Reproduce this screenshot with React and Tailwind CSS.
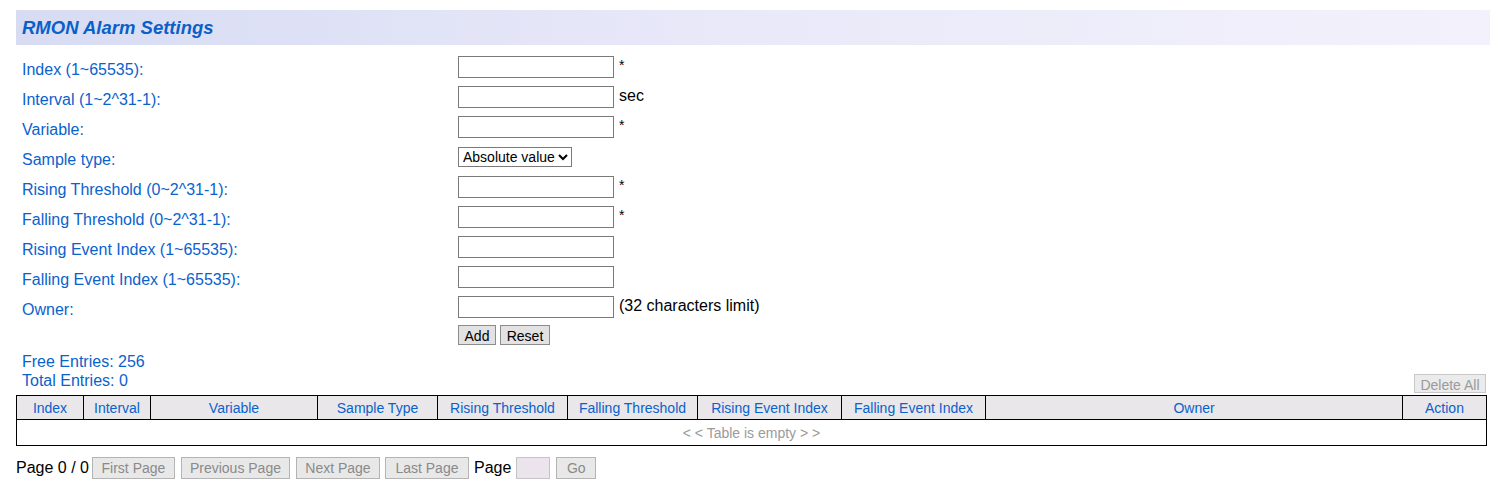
import React from "react";

const rows = [
  { label: "Index (1~65535):", suffix: "*" },
  { label: "Interval (1~2^31-1):", suffix: "sec" },
  { label: "Variable:", suffix: "*" },
  { label: "Sample type:", select: true },
  { label: "Rising Threshold (0~2^31-1):", suffix: "*" },
  { label: "Falling Threshold (0~2^31-1):", suffix: "*" },
  { label: "Rising Event Index (1~65535):" },
  { label: "Falling Event Index (1~65535):" },
  { label: "Owner:", suffix: "(32 characters limit)" },
];

const cols = [
  ["Index", 67],
  ["Interval", 67],
  ["Variable", 167],
  ["Sample Type", 120],
  ["Rising Threshold", 130],
  ["Falling Threshold", 130],
  ["Rising Event Index", 144],
  ["Falling Event Index", 144],
  ["Owner", 417],
  ["Action", 84],
];

function PageBtn({ children, w, className = "" }) {
  return (
    <button
      className={`h-[22px] border border-[#b4b4b4] bg-[#e8e8e8] text-[14px] text-[#8a8a8a] px-0 whitespace-nowrap ${className}`}
      style={{ width: w }}
    >
      {children}
    </button>
  );
}

export default function App() {
  return (
    <div
      className="w-[1495px] h-[492px] bg-white pt-[10px] text-[16px]"
      style={{ fontFamily: '"Liberation Sans", Arial, sans-serif' }}
    >
      <div className="ml-4 mr-[5px] h-[35px] flex items-center pl-[6px] bg-gradient-to-r from-[#d7dcf3] via-[#e9e9f9] to-[#f3f1fb]">
        <h1 className="text-[18.5px] font-bold italic text-[#0a5fc9]">RMON Alarm Settings</h1>
      </div>

      <div className="ml-4 mt-[7px]">
        {rows.map((r, i) => (
          <div key={i} className="flex items-center h-[30px]">
            <div className="w-[442px] pl-[6px] pt-[5px] text-[#0a62cc]">{r.label}</div>
            {r.select ? (
              <select className="h-[20px] w-[114px] border border-[#7a7a7a] bg-white text-[14px] text-black pl-0 leading-none">
                <option>Absolute value</option>
              </select>
            ) : (
              <input className="h-[22px] w-[156px] border border-[#7a7a7a] bg-white outline-none" />
            )}
            {r.suffix && (
              <span className={`ml-[5px] text-black ${r.suffix === "*" ? "self-start mt-[3px] text-[14px]" : "-mt-[3px]"}`}>
                {r.suffix}
              </span>
            )}
          </div>
        ))}
        <div className="flex items-center h-[26px] pl-[442px] gap-[4px]">
          <button className="h-[20px] w-[38px] border border-[#8c8c8c] bg-[#e2e2e2] text-[14px] text-black">Add</button>
          <button className="h-[20px] w-[50px] border border-[#8c8c8c] bg-[#e2e2e2] text-[14px] text-black">Reset</button>
        </div>
      </div>

      <div className="ml-4 mr-[9px] mt-[4px] flex items-end justify-between">
        <div className="pl-[6px] text-[#0a62cc] leading-[19px] pb-[4px]">
          <div>Free Entries: 256</div>
          <div>Total Entries: 0</div>
        </div>
        <button className="h-[19px] w-[72px] mb-[1px] border border-[#c8c8c8] bg-[#ebebeb] text-[14px] text-[#9a9a9a]">
          Delete All
        </button>
      </div>

      <table className="ml-4 mt-[1px] w-[1470px] border-collapse border border-black text-[14px] table-fixed">
        <thead>
          <tr className="h-[24px] bg-[#e9e7ea]">
            {cols.map(([n, w]) => (
              <th key={n} style={{ width: w }} className="border border-black font-normal text-[#0a62cc] p-0 pt-[2px]">
                {n}
              </th>
            ))}
          </tr>
        </thead>
        <tbody>
          <tr className="h-[26px]">
            <td colSpan={10} className="text-center text-[#9a9a9a] p-0 pt-[2px]">
              &lt; &lt; Table is empty &gt; &gt;
            </td>
          </tr>
        </tbody>
      </table>

      <div className="ml-4 mt-[10px] flex items-center text-black">
        <span>Page 0 / 0</span>
        <PageBtn w={83} className="ml-[3px]">First Page</PageBtn>
        <PageBtn w={109} className="ml-[6px]">Previous Page</PageBtn>
        <PageBtn w={84} className="ml-[6px]">Next Page</PageBtn>
        <PageBtn w={84} className="ml-[5px]">Last Page</PageBtn>
        <span className="ml-[5px]">Page</span>
        <input className="ml-[5px] h-[22px] w-[34px] border border-[#c4c4c4] bg-[#ece4ec] outline-none" />
        <PageBtn w={40} className="ml-[6px]">Go</PageBtn>
      </div>
    </div>
  );
}
